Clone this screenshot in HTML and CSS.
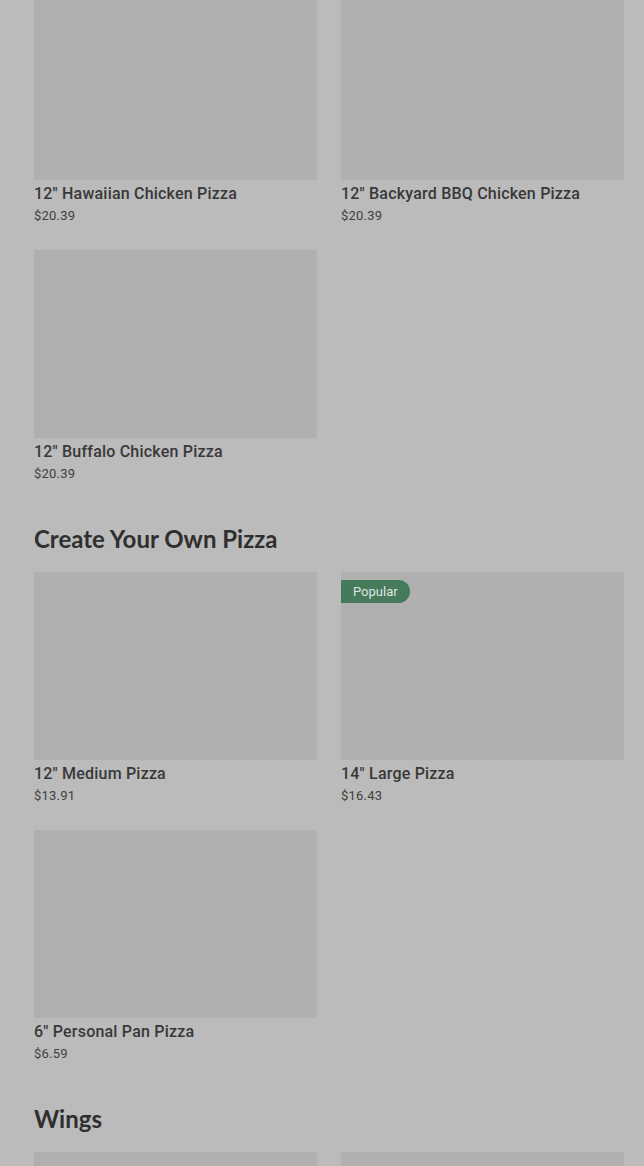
FILE: index.html
```html
<!DOCTYPE html>
<html lang="en">
<head>
<meta charset="utf-8">
<link rel="stylesheet" href="styles.css">
</head>
<body>
<main class="menu">
  <section class="section first">
    <div class="grid">
      <div class="card"><div class="thumb"></div><div class="name">12" Hawaiian Chicken Pizza</div><div class="price">$20.39</div></div>
      <div class="card"><div class="thumb"></div><div class="name">12" Backyard BBQ Chicken Pizza</div><div class="price">$20.39</div></div>
      <div class="card"><div class="thumb"></div><div class="name">12" Buffalo Chicken Pizza</div><div class="price">$20.39</div></div>
    </div>
  </section>
  <section class="section">
    <h2 class="heading">Create Your Own Pizza</h2>
    <div class="grid">
      <div class="card"><div class="thumb"></div><div class="name">12" Medium Pizza</div><div class="price">$13.91</div></div>
      <div class="card"><div class="thumb"><span class="badge">Popular</span></div><div class="name">14" Large Pizza</div><div class="price">$16.43</div></div>
      <div class="card"><div class="thumb"></div><div class="name">6" Personal Pan Pizza</div><div class="price">$6.59</div></div>
    </div>
  </section>
  <section class="section">
    <h2 class="heading">Wings</h2>
    <div class="grid">
      <div class="card"><div class="thumb"></div></div>
      <div class="card"><div class="thumb"></div></div>
    </div>
  </section>
</main>
</body>
</html>
```
FILE: styles.css
```css
html, body {
  margin: 0;
  padding: 0;
  background: #bbbbbb;
  overflow: hidden;
}
.menu {
  margin-top: -8px;
  padding: 0 20px 0 34px;
  font-family: Roboto, "Liberation Sans", sans-serif;
}
.section {
  margin-bottom: 40px;
}
.heading {
  margin: 0 0 18px 0;
  font-family: Lato, "Liberation Sans", sans-serif;
  font-weight: 700;
  font-size: 24px;
  line-height: 30px;
  letter-spacing: 0;
  color: #2f2f2f;
}
.grid {
  display: grid;
  grid-template-columns: 283px 283px;
  column-gap: 24px;
  row-gap: 24px;
}
.thumb {
  position: relative;
  height: 188px;
  background: #b0b0b0;
}
.badge {
  position: absolute;
  top: 8px;
  left: 0;
  height: 23px;
  line-height: 23px;
  padding: 0 12px 0 12px;
  background: #457a5a;
  color: #dfe6e1;
  font-size: 13px;
  border-radius: 0 12px 12px 0;
}
.name {
  margin-top: 4px;
  font-size: 16px;
  font-weight: 500;
  line-height: 20px;
  letter-spacing: 0.2px;
  color: #383838;
}
.price {
  margin-top: 2px;
  font-size: 13px;
  line-height: 20px;
  letter-spacing: 0.2px;
  color: #404040;
}
```
